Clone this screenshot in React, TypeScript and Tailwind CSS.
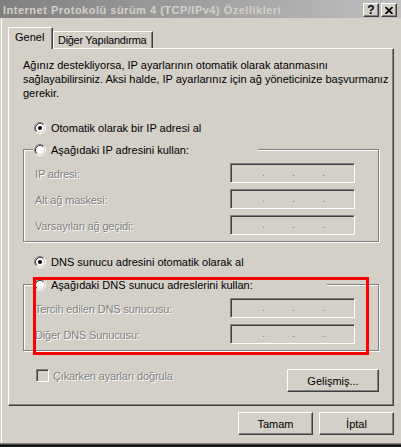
import React from "react";

function Radio({ checked }: { checked?: boolean }) {
  return (
    <svg width="12" height="12" viewBox="0 0 12 12" className="shrink-0">
      <circle cx="6" cy="6" r="4.2" fill="#ffffff" />
      <path d="M2.11 9.89A5.5 5.5 0 0 1 9.89 2.11" fill="none" stroke="#808080" />
      <path d="M9.89 2.11A5.5 5.5 0 0 1 2.11 9.89" fill="none" stroke="#ffffff" />
      <path d="M2.82 9.18A4.5 4.5 0 0 1 9.18 2.82" fill="none" stroke="#404040" />
      <path d="M9.18 2.82A4.5 4.5 0 0 1 2.82 9.18" fill="none" stroke="#d4d0c8" />
      {checked && <circle cx="6" cy="6" r="2" fill="#000000" />}
    </svg>
  );
}

function IPField() {
  return (
    <div className="w-[125px] h-[20px] shrink-0 border border-t-[#808080] border-l-[#808080] border-r-white border-b-white shadow-[inset_1px_1px_0_#404040] bg-[#d4d0c8] flex pl-[31px] pt-[1px] text-[11px] leading-[14px] text-[#808080]">
      <span className="w-[30px]">.</span>
      <span className="w-[30px]">.</span>
      <span>.</span>
    </div>
  );
}

function FieldRow({ label }: { label: string }) {
  return (
    <div className="flex items-center h-[20px]">
      <span className="w-[195px] pt-[2px] whitespace-nowrap tracking-[-0.15px] text-[#808080] [text-shadow:1px_1px_0_#ffffff]">
        {label}
      </span>
      <IPField />
    </div>
  );
}

const btn =
  "h-[23px] bg-[#d4d0c8] border border-t-white border-l-white border-r-[#404040] border-b-[#404040] shadow-[inset_-1px_-1px_0_#808080] flex items-center justify-center text-[11px] text-black";

export default function App() {
  return (
    <div className="relative w-[401px] h-[447px] overflow-hidden bg-[#d4d0c8] flex flex-col font-['Liberation_Sans',Arial,sans-serif] text-[11px] leading-[14px] text-black">
      {/* Title bar */}
      <div className="h-[18px] shrink-0 flex items-start bg-linear-to-r from-[#808080] to-[#c0c0c0]">
        <span className="pl-[3px] pt-[3px] font-bold tracking-[0.5px] text-[#d4d0c8] whitespace-nowrap">
          Internet Protokolü sürüm 4 (TCP/IPv4) Özellikleri
        </span>
        <div className="ml-auto mr-[4px] mt-[3px] flex gap-[2px]">
          <div className="w-[16px] h-[14px] bg-[#d4d0c8] border border-t-white border-l-white border-r-[#404040] border-b-[#404040] shadow-[inset_-1px_-1px_0_#808080] flex items-center justify-center font-bold text-[12px] leading-[12px]">
            ?
          </div>
          <div className="w-[16px] h-[14px] bg-[#d4d0c8] border border-t-white border-l-white border-r-[#404040] border-b-[#404040] shadow-[inset_-1px_-1px_0_#808080] flex items-center justify-center">
            <svg width="8" height="7" viewBox="0 0 8 7">
              <path d="M0.5 0 L7.5 7 M7.5 0 L0.5 7" stroke="#000000" strokeWidth="1.7" fill="none" />
            </svg>
          </div>
        </div>
      </div>

      {/* Body */}
      <div className="flex-1 flex flex-col ml-[1px] border-l border-white pl-[6px] pr-[7px] pt-[9px]">
        {/* Tabs */}
        <div className="h-[21px] flex items-end">
          <div className="relative z-10 w-[45px] h-[22px] -mb-[1px] bg-[#d4d0c8] border-l border-t border-r border-l-white border-t-white border-r-[#404040] shadow-[inset_-1px_0_0_#808080] pl-[6px] pt-[2px] whitespace-nowrap">
            Genel
          </div>
          <div className="w-[100px] h-[17px] bg-[#d4d0c8] border-l border-t border-r border-l-white border-t-white border-r-[#404040] shadow-[inset_-1px_0_0_#808080] pl-[4px] pt-[1px] whitespace-nowrap tracking-[-0.3px]">
            Diğer Yapılandırma
          </div>
        </div>

        {/* Panel */}
        <div className="w-[386px] h-[358px] shrink-0 border border-l-white border-t-white border-r-[#404040] border-b-[#404040] shadow-[inset_-1px_-1px_0_#808080] pl-[14px] pt-[9px]">
          <div className="w-[356px] flex flex-col">
            <p className="whitespace-nowrap">
              Ağınız destekliyorsa, IP ayarlarının otomatik olarak atanmasını
              <br />
              sağlayabilirsiniz. Aksi halde, IP ayarlarınız için ağ yöneticinize başvurmanız
              <br />
              gerekir.
            </p>

            <div className="mt-[20px] h-[16px] flex items-center pl-[11px]">
              <Radio checked />
              <span className="ml-[5px] whitespace-nowrap">Otomatik olarak bir IP adresi al</span>
            </div>

            {/* Group 1 */}
            <div className="mt-[13px] w-[356px] border border-[#808080] shadow-[1px_1px_0_#ffffff,inset_1px_1px_0_#ffffff] pb-[6px]">
              <div className="-mt-[8px] ml-[9px] w-[225px] h-[16px] bg-[#d4d0c8] flex items-center pl-[1px]">
                <Radio />
                <span className="ml-[5px] whitespace-nowrap">Aşağıdaki IP adresini kullan:</span>
              </div>
              <div className="mt-[5px] flex flex-col gap-[6px] pl-[11px]">
                <FieldRow label="IP adresi:" />
                <FieldRow label="Alt ağ maskesi:" />
                <FieldRow label="Varsayılan ağ geçidi:" />
              </div>
            </div>

            <div className="mt-[12px] h-[16px] flex items-center pl-[11px]">
              <Radio checked />
              <span className="ml-[5px] whitespace-nowrap">DNS sunucu adresini otomatik olarak al</span>
            </div>

            {/* Group 2 */}
            <div className="mt-[14px] w-[356px] border border-[#808080] shadow-[1px_1px_0_#ffffff,inset_1px_1px_0_#ffffff] pb-[6px]">
              <div className="-mt-[8px] ml-[9px] w-[294px] h-[16px] bg-[#d4d0c8] flex items-center pl-[1px]">
                <Radio />
                <span className="ml-[5px] whitespace-nowrap">Aşağıdaki DNS sunucu adreslerini kullan:</span>
              </div>
              <div className="mt-[5px] flex flex-col gap-[6px] pl-[11px]">
                <FieldRow label="Tercih edilen DNS sunucusu:" />
                <FieldRow label="Diğer DNS Sunucusu:" />
              </div>
            </div>

            {/* Checkbox + advanced */}
            <div className="mt-[18px] flex items-start">
              <div className="ml-[13px] flex items-center h-[13px]">
                <div className="w-[13px] h-[13px] border border-t-[#808080] border-l-[#808080] border-r-white border-b-white shadow-[inset_1px_1px_0_#404040] bg-[#d4d0c8]" />
                <span className="ml-[4px] whitespace-nowrap tracking-[-0.15px] text-[#808080] [text-shadow:1px_1px_0_#ffffff]">
                  Çıkarken ayarları doğrula
                </span>
              </div>
              <button className={btn + " ml-auto w-[92px]"}>Gelişmiş...</button>
            </div>
          </div>
        </div>

        {/* Dialog buttons */}
        <div className="mt-[6px] flex justify-end gap-[6px]">
          <button className={btn + " w-[75px]"}>Tamam</button>
          <button className={btn + " w-[75px]"}>İptal</button>
        </div>
      </div>

      {/* Bottom frame */}
      <div className="h-[1px] shrink-0 bg-[#808080]" />
      <div className="h-[1px] shrink-0 bg-[#404040]" />
      <div className="h-[2px] shrink-0 bg-[#141414]" />

      {/* Red annotation */}
      <div className="absolute left-[33px] top-[277px] w-[336px] h-[78px] border-[3px] border-[#ff0000] pointer-events-none" />
    </div>
  );
}
